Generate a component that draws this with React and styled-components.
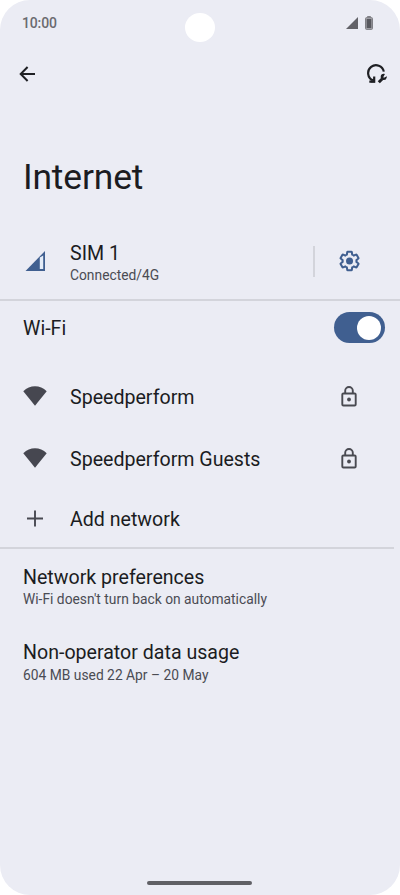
import React from "react"
import styled, { createGlobalStyle } from "styled-components"

const GlobalStyle = createGlobalStyle`
  * {
    box-sizing: border-box;
  }
  body {
    margin: 0;
    background: #ffffff;
    font-family: Roboto, sans-serif;
  }
  svg {
    display: block;
  }
`;

const Screen = styled.div`
  position: relative;
  width: 400px;
  height: 895px;
  display: flex;
  flex-direction: column;
  background: #ebecf4;
  border-radius: 30px;
  overflow: hidden;
`;

const StatusBar = styled.header`
  height: 46px;
  padding: 0 27px 0 22px;
  display: flex;
  align-items: center;
  justify-content: space-between;
`;

const Time = styled.span`
  font-size: 14px;
  font-weight: 500;
  letter-spacing: -0.15px;
  color: #6a6a6f;
`;

const StatusIcons = styled.div`
  display: flex;
  align-items: center;
  gap: 7px;
`;

const Camera = styled.div`
  position: absolute;
  top: 13px;
  left: 185px;
  width: 30px;
  height: 29px;
  border-radius: 50%;
  background: #ffffff;
`;

const Toolbar = styled.nav`
  height: 56px;
  padding: 0 13px 0 19px;
  display: flex;
  align-items: center;
  justify-content: space-between;
`;

const IconButton = styled.button`
  display: flex;
  padding: 0;
  border: none;
  background: none;
  cursor: pointer;
`;

const Title = styled.h1`
  margin: 53px 0 26px 23px;
  font-size: 35.4px;
  line-height: 44px;
  font-weight: 400;
  letter-spacing: -0.15px;
  color: #1b1c22;
`;

const Row = styled.div`
  flex: none;
  height: ${(props) => props.$height}px;
  margin-bottom: ${(props) => props.$bottom || 0}px;
  padding-left: 23px;
  padding-right: ${(props) => props.$right || 0}px;
  display: flex;
  align-items: center;
`;

const Leading = styled.div`
  width: 47px;
  display: flex;
  align-items: center;
`;

const Texts = styled.div`
  flex: 1;
  padding-top: ${(props) => props.$top || 0}px;
  display: flex;
  flex-direction: column;
`;

const Label = styled.span`
  font-size: 19.6px;
  line-height: 24px;
  color: #1b1c22;
`;

const Detail = styled.span`
  margin-top: ${(props) => (props.$tight ? -1 : 0)}px;
  font-size: 13.8px;
  line-height: 20px;
  letter-spacing: 0.01px;
  color: #4a4b53;
`;

const VerticalRule = styled.div`
  width: 2px;
  height: 31px;
  margin-right: 23px;
  background: #d3d4db;
`;

const Divider = styled.hr`
  flex: none;
  width: ${(props) => props.$width || 400}px;
  height: 2px;
  margin: 0;
  border: none;
  background: #d3d4db;
`;

const Toggle = styled.button`
  width: 51px;
  height: 31px;
  padding: 0 4px;
  display: flex;
  align-items: center;
  justify-content: flex-end;
  border: none;
  border-radius: 16px;
  background: #405f90;
`;

const Knob = styled.span`
  width: 24px;
  height: 24px;
  border-radius: 50%;
  background: #ffffff;
`;

const HomeBar = styled.div`
  width: 105px;
  height: 4px;
  margin: auto auto 10px 147px;
  border-radius: 2px;
  background: #606065;
`;

const WifiIcon = () => (
  <svg width="24" height="20" viewBox="0 0 24 20">
    <path d="M0.3 5.2C3.6 1.9 7.7.3 12 .3s8.400 1.600 11.700 4.900L12 19.700z" fill="#464750" />
  </svg>
);

const LockIcon = () => (
  <svg width="16" height="21" viewBox="0 0 16 21">
    <rect x="1.300" y="7.500" width="13.400" height="12" rx="1.100" fill="none" stroke="#494a51" strokeWidth="1.900" />
    <path d="M4.200 7.500V4.800a3.800 3.800 0 0 1 7.600 0v2.700" fill="none" stroke="#494a51" strokeWidth="1.900" />
    <circle cx="8" cy="13.500" r="1.900" fill="#494a51" />
  </svg>
);

const GearIcon = () => (
  <svg width="24" height="24" viewBox="-0.5 -1 26 26">
    <path
      d="M19.430 12.980c.04-.32.07-.64.07-.98 0-.34-.03-.66-.07-.98l2.110-1.650c.19-.15.24-.42.12-.64l-2-3.460c-.09-.16-.26-.25-.44-.25-.06 0-.12.01-.17.03l-2.490 1c-.52-.4-1.080-.73-1.690-.98l-.38-2.650C14.460 2.180 14.250 2 14 2h-4c-.25 0-.46.18-.49.42l-.38 2.650c-.61.25-1.170.59-1.690.98l-2.490-1c-.06-.02-.12-.03-.18-.03-.17 0-.34.09-.43.25l-2 3.460c-.13.22-.07.49.12.64l2.110 1.650c-.04.32-.07.65-.07.98 0 .33.03.66.07.98l-2.110 1.650c-.19.15-.24.42-.12.64l2 3.460c.09.16.26.25.44.25.06 0 .12-.01.17-.03l2.490-1c.52.4 1.080.73 1.690.98l.38 2.650c.03.24.24.42.49.42h4c.25 0 .46-.18.49-.42l.38-2.650c.61-.25 1.170-.59 1.690-.98l2.490 1c.06.02.12.03.18.03.17 0 .34-.09.43-.25l2-3.460c.12-.22.07-.49-.12-.64z"
      fill="none"
      stroke="#405f90"
      strokeWidth="2.200"
    />
    <circle cx="12" cy="12" r="3.800" fill="#405f90" />
  </svg>
);

const ResetIcon = () => (
  <svg width="20" height="20" viewBox="0 0 20 20" fill="none" stroke="#1f2024" strokeWidth="2.200">
    <path d="M5.800 16.300A7.900 7.900 0 1 1 16.800 7.600" />
    <path d="M2.300 17.700h4.900v-5.200" />
    <path d="M3.500 18.500L8 13.500v5z" fill="#1f2024" stroke="none" />
    {/* wrench */}
    <path d="M11.800 18.200l3.500-3.500" strokeWidth="3" />
    <path d="M16.900 10.500a2.400 2.400 0 1 0 2.200 2.800l-2.400 1.200-1.200-1.300z" fill="#1f2024" strokeWidth="1.300" />
  </svg>
);

const networks = ["Speedperform", "Speedperform Guests"];

const App = () => {
  return (
    <>
      <GlobalStyle />
      <Screen>
        <StatusBar>
          <Time>10:00</Time>
          <StatusIcons>
            <svg width="12" height="12" viewBox="0 0 12 12">
              <path d="M12 0v12H0z" fill="#626268" />
            </svg>
            <svg width="8" height="14" viewBox="0 0 8 14">
              <rect x="0.500" y="1.600" width="7" height="11.800" rx="1" fill="#a2a2a8" stroke="#808086" />
              <path d="M2.200.8h3.600" stroke="#808086" strokeWidth="1.400" />
              <rect x="1.700" y="3" width="4.600" height="9" fill="#58585e" />
            </svg>
          </StatusIcons>
        </StatusBar>
        <Camera />
        <Toolbar>
          <IconButton aria-label="Back">
            <svg width="17" height="16" viewBox="0 0 17 16" fill="none" stroke="#1f2024" strokeWidth="2">
              <path d="M16 8H2M8.600 1L1.700 8l6.900 7" />
            </svg>
          </IconButton>
          <IconButton aria-label="Reset">
            <ResetIcon />
          </IconButton>
        </Toolbar>
        <Title>Internet</Title>
        <Row $height={72} $bottom={2} $right={38}>
          <Leading>
            <svg width="24" height="20" viewBox="0 0 24 20">
              <path d="M22 0v20H2.500z" fill="#405f90" />
              <path d="M16.800 6.500l3.400-2V18h-3.400z" fill="#e5edf8" />
            </svg>
          </Leading>
          <Texts $top={4}>
            <Label>SIM 1</Label>
            <Detail $tight>Connected/4G</Detail>
          </Texts>
          <VerticalRule />
          <GearIcon />
        </Row>
        <Divider />
        <Row $height={53} $bottom={11} $right={15}>
          <Texts $top={3}>
            <Label>Wi-Fi</Label>
          </Texts>
          <Toggle role="switch" aria-checked="true" aria-label="Wi-Fi">
            <Knob />
          </Toggle>
        </Row>
        {networks.map((name) => (
          <Row key={name} $height={62} $right={43}>
            <Leading>
              <WifiIcon />
            </Leading>
            <Texts $top={4}>
              <Label>{name}</Label>
            </Texts>
            <LockIcon />
          </Row>
        ))}
        <Row $height={58}>
          <Leading>
            <svg width="24" height="18" viewBox="0 0 24 18">
              <path d="M12 1.500v16M4 9.500h16" stroke="#484951" strokeWidth="1.900" />
            </svg>
          </Leading>
          <Texts $top={4}>
            <Label>Add network</Label>
          </Texts>
        </Row>
        <Divider $width={394} />
        <Row $height={76}>
          <Texts>
            <Label>Network preferences</Label>
            <Detail $tight>Wi-Fi doesn't turn back on automatically</Detail>
          </Texts>
        </Row>
        <Row $height={76}>
          <Texts>
            <Label>Non-operator data usage</Label>
            <Detail>604 MB used 22 Apr – 20 May</Detail>
          </Texts>
        </Row>
        <HomeBar />
      </Screen>
    </>
  )
}

export default App
